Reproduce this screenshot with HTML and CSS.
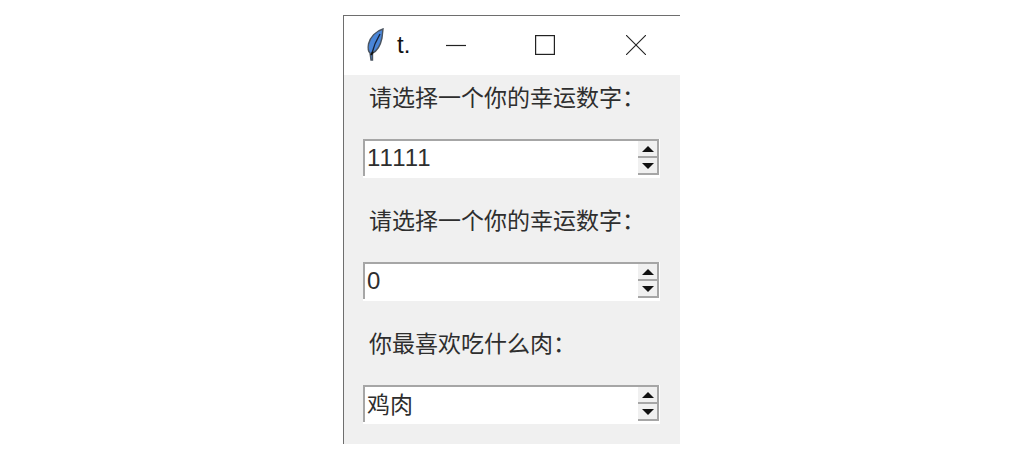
FILE: index.html
```html
<!DOCTYPE html>
<html>
<head>
    <title>t.</title>
    <link rel="stylesheet" href="styles.css">
</head>
<body>

<div class="window">
    <div class="titlebar">
        <svg class="feather" width="20" height="34" viewBox="0 0 20 34">
            <path d="M18 1 C11 3 5 9 3.5 16 C2.8 20 3 23 5 25 L6 32 L7.5 32 L7.5 25 C12 23 15.5 17 17 10 Z" fill="#4a86d8" stroke="#4a5460" stroke-width="1.4"/>
            <path d="M15 6 C12 11 9 17 7 25" fill="none" stroke="#16233a" stroke-width="1.4"/>
            <path d="M6 27 L8 24" stroke="#111" stroke-width="2"/>
        </svg>
        <span class="title">t.</span>
        <svg class="btn btn-min" width="20" height="20" viewBox="0 0 20 20"><path d="M0 10.5 H20" stroke="#222" stroke-width="1.2"/></svg>
        <svg class="btn btn-max" width="20" height="20" viewBox="0 0 20 20"><rect x="0.6" y="0.6" width="18.8" height="18.8" fill="none" stroke="#222" stroke-width="1.2"/></svg>
        <svg class="btn btn-close" width="20" height="20" viewBox="0 0 20 20"><path d="M0 0 L20 20 M20 0 L0 20" stroke="#222" stroke-width="1.1"/></svg>
    </div>
    <div class="content">
        <div class="row">
            <div class="label">请选择一个你的幸运数字：</div>
            <div class="spinbox">
                <div class="field">
                    <span class="value num">11111</span>
                    <div class="arrows"><span class="up"></span><span class="down"></span></div>
                </div>
            </div>
        </div>
        <div class="row">
            <div class="label">请选择一个你的幸运数字：</div>
            <div class="spinbox">
                <div class="field">
                    <span class="value num">0</span>
                    <div class="arrows"><span class="up"></span><span class="down"></span></div>
                </div>
            </div>
        </div>
        <div class="row">
            <div class="label">你最喜欢吃什么肉：</div>
            <div class="spinbox">
                <div class="field">
                    <span class="value">鸡肉</span>
                    <div class="arrows"><span class="up"></span><span class="down"></span></div>
                </div>
            </div>
        </div>
    </div>
</div>

</body>
</html>
```

FILE: styles.css
```css
html, body {
    margin: 0;
    height: 100%;
    background-color: #fff;
    overflow: hidden;
}
body {
    font-family: "Liberation Sans", "Noto Sans CJK SC", sans-serif;
}
.window {
    width: 336px;
    height: 428px;
    margin: 15px 0 0 343px;
    border-top: 1px solid #6e6e6e;
    border-left: 1px solid #6e6e6e;
    background-color: #f0f0f0;
    display: flex;
    flex-direction: column;
}
.titlebar {
    height: 59px;
    padding-bottom: 2px;
    box-sizing: border-box;
    background-color: #fff;
    display: flex;
    align-items: center;
    flex-shrink: 0;
}
.feather {
    margin-left: 21px;
}
.title {
    margin-left: 12px;
    font-size: 24px;
    color: #111;
}
.btn-min {
    margin-left: 36px;
}
.btn-max {
    margin-left: 69px;
}
.btn-close {
    margin-left: 71px;
}
.content {
    padding: 0 20px 0 19px;
}
.row {
    height: 123px;
    display: flex;
    flex-direction: column;
}
.label {
    height: 64px;
    line-height: 46px;
    padding-left: 6px;
    font-size: 23px;
    color: #2e2e2e;
    white-space: nowrap;
}
.spinbox {
    height: 39px;
    padding: 0 1px 2px 0;
    box-sizing: border-box;
    background-color: #fff;
    display: flex;
}
.field {
    flex: 1;
    border-top: 2px solid #a6a6a6;
    border-left: 2px solid #a6a6a6;
    display: flex;
    justify-content: space-between;
}
.value {
    font-size: 23px;
    line-height: 37px;
    color: #2e2e2e;
    padding-left: 2px;
}
.num {
    font-size: 24px;
    line-height: 34px;
    letter-spacing: 1px;
}
.arrows {
    width: 21px;
    height: 34px;
    border-right: 2px solid #a6a6a6;
    border-bottom: 2px solid #a6a6a6;
    box-sizing: border-box;
    background-color: #f0f0f0;
    display: flex;
    flex-direction: column;
}
.up, .down {
    flex: 1;
    display: flex;
    align-items: center;
    justify-content: center;
}
.up {
    border-bottom: 2px solid #a6a6a6;
}
.up::before {
    content: "";
    border-left: 6px solid transparent;
    border-right: 6px solid transparent;
    border-bottom: 6px solid #111;
}
.down::before {
    content: "";
    border-left: 6px solid transparent;
    border-right: 6px solid transparent;
    border-top: 6px solid #111;
}
```
